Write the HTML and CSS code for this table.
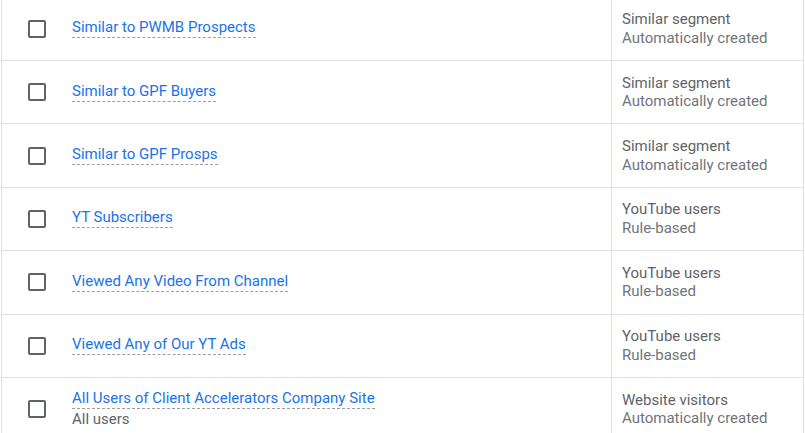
FILE: index.html
```html
<!DOCTYPE html>
<html>
<head>
<meta charset="utf-8">
<link rel="stylesheet" href="styles.css">
</head>
<body>
<div class="table">
  <div class="row">
    <div class="cell-check"><span class="checkbox"></span></div>
    <div class="cell-name"><a class="name">Similar to PWMB Prospects</a></div>
    <div class="cell-type"><div class="type">Similar segment</div><div class="sub">Automatically created</div></div>
  </div>
  <div class="row">
    <div class="cell-check"><span class="checkbox"></span></div>
    <div class="cell-name"><a class="name">Similar to GPF Buyers</a></div>
    <div class="cell-type"><div class="type">Similar segment</div><div class="sub">Automatically created</div></div>
  </div>
  <div class="row">
    <div class="cell-check"><span class="checkbox"></span></div>
    <div class="cell-name"><a class="name">Similar to GPF Prosps</a></div>
    <div class="cell-type"><div class="type">Similar segment</div><div class="sub">Automatically created</div></div>
  </div>
  <div class="row">
    <div class="cell-check"><span class="checkbox"></span></div>
    <div class="cell-name"><a class="name">YT Subscribers</a></div>
    <div class="cell-type"><div class="type">YouTube users</div><div class="sub">Rule-based</div></div>
  </div>
  <div class="row">
    <div class="cell-check"><span class="checkbox"></span></div>
    <div class="cell-name"><a class="name">Viewed Any Video From Channel</a></div>
    <div class="cell-type"><div class="type">YouTube users</div><div class="sub">Rule-based</div></div>
  </div>
  <div class="row">
    <div class="cell-check"><span class="checkbox"></span></div>
    <div class="cell-name"><a class="name">Viewed Any of Our YT Ads</a></div>
    <div class="cell-type"><div class="type">YouTube users</div><div class="sub">Rule-based</div></div>
  </div>
  <div class="row">
    <div class="cell-check"><span class="checkbox"></span></div>
    <div class="cell-name"><a class="name">All Users of Client Accelerators Company Site</a><div class="desc">All users</div></div>
    <div class="cell-type"><div class="type">Website visitors</div><div class="sub">Automatically created</div></div>
  </div>
</div>
</body>
</html>
```
FILE: styles.css
```css
html, body {
  margin: 0;
  padding: 0;
  background: #ffffff;
  overflow: hidden;
}
body {
  font-family: Roboto, "Liberation Sans", Arial, sans-serif;
  font-size: 15px;
  color: #5f6368;
}
.table {
  margin-top: -2.4px;
  margin-left: 1px;
  width: 803px;
  box-sizing: border-box;
  border-left: 1px solid #e0e0e0;
  border-right: 1px solid #e0e0e0;
}
.row {
  display: grid;
  grid-template-columns: 70px 539px 1fr;
  height: 63.4px;
  box-sizing: border-box;
  border-bottom: 1px solid #e0e0e0;
}
.cell-check {
  display: flex;
  align-items: center;
  padding-left: 26px;
}
.checkbox {
  display: block;
  width: 18px;
  height: 18px;
  box-sizing: border-box;
  border: 2px solid #5f6368;
  border-radius: 2px;
}
.cell-name {
  display: flex;
  flex-direction: column;
  justify-content: center;
  align-items: flex-start;
}
.name {
  color: #1a73e8;
  line-height: 17px;
  border-bottom: 1px dashed #9aa0a6;
  padding-bottom: 1px;
  cursor: pointer;
}
.desc {
  color: #5f6368;
  line-height: 20px;
}
.cell-type {
  border-left: 1px solid #e0e0e0;
  padding-left: 10px;
  display: flex;
  flex-direction: column;
  justify-content: center;
  line-height: 18.5px;
}
.type {
  color: #5f6368;
}
.sub {
  color: #70757a;
}
```
